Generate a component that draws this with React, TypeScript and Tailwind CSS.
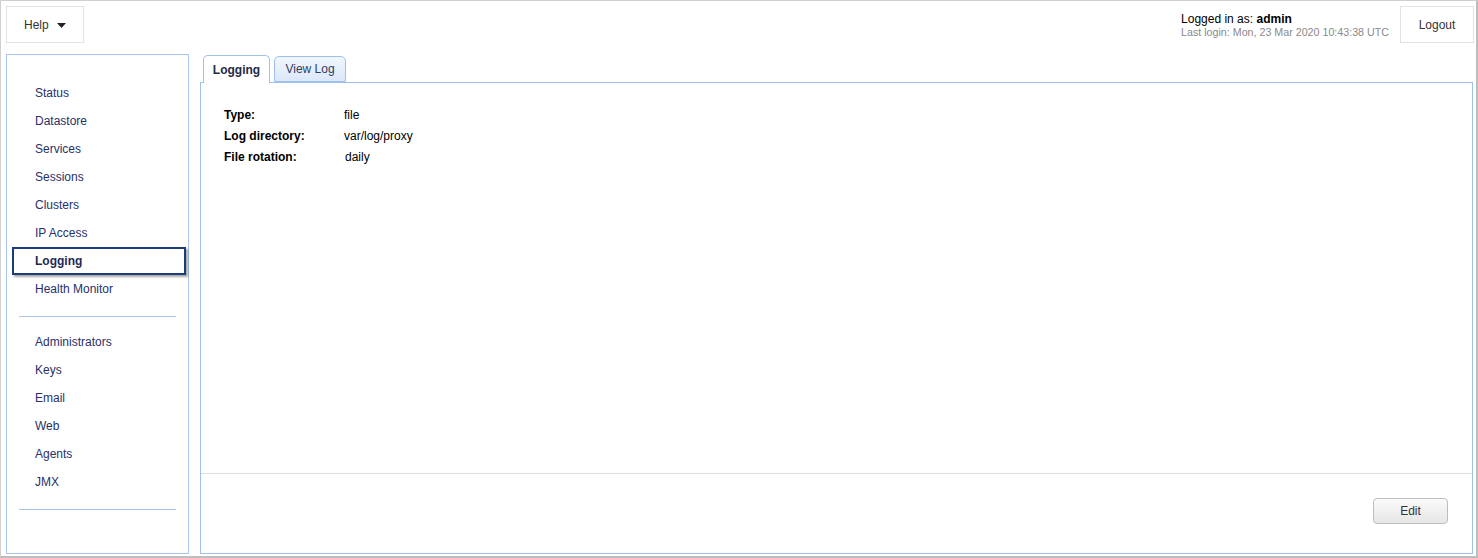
import React from "react";

const navTop = ["Status", "Datastore", "Services", "Sessions", "Clusters", "IP Access", "Logging", "Health Monitor"];
const navBottom = ["Administrators", "Keys", "Email", "Web", "Agents", "JMX"];

function NavItem({ label, active }: { label: string; active?: boolean }) {
  return (
    <div
      className={
        "ml-[5px] mr-[2px] h-[28px] flex items-center pl-[21px] border-2 text-[12px] " +
        (active
          ? "border-[#1b3d7c] font-bold text-[#1f2a55] shadow-[2px_2px_2px_rgba(0,0,0,0.35)]"
          : "border-transparent text-[#28306a]")
      }
    >
      {label}
    </div>
  );
}

export default function App() {
  return (
    <div
      className="w-[1478px] h-[558px] bg-white border-l border-t border-r-2 border-b-2 border-l-[#cfcfcf] border-t-[#cfcfcf] border-r-[#bdbdbd] border-b-[#bdbdbd] box-border pl-[5px] pt-[5px] pr-[1px] flex flex-col"
      style={{ fontFamily: '"Liberation Sans", Arial, sans-serif' }}
    >
      {/* header */}
      <div className="flex items-start h-[37px]">
        <div className="w-[78px] h-[37px] border border-[#e2e2e2] flex items-center pl-[17px] text-[12px] text-[#333]">
          <span>Help</span>
          <svg width="9" height="5" viewBox="0 0 9 5" className="ml-[8px] mt-[1px]">
            <path d="M0 0 L9 0 L4.5 5 Z" fill="#222" />
          </svg>
        </div>
        <div className="flex-1" />
        <div className="flex flex-col pt-[6px] mr-[11px]">
          <div className="text-[12px] text-black leading-[14px]">
            Logged in as: <b>admin</b>
          </div>
          <div className="text-[10.7px] text-[#8a8a8a] leading-[13px]">
            Last login: Mon, 23 Mar 2020 10:43:38 UTC
          </div>
        </div>
        <div className="w-[74px] h-[37px] border border-[#e2e2e2] flex items-center justify-center text-[12px] text-[#333] mr-[1px]">
          Logout
        </div>
      </div>

      {/* body */}
      <div className="flex mt-[11px] h-[500px]">
        {/* sidebar */}
        <div className="w-[183px] h-[500px] border border-[#a9c6ee] pt-[24px] flex flex-col">
          {navTop.map((n) => (
            <NavItem key={n} label={n} active={n === "Logging"} />
          ))}
          <div className="mx-[12px] mt-[13px] h-px bg-[#a9c6ee]" />
          <div className="mt-[11px] flex flex-col">
            {navBottom.map((n) => (
              <NavItem key={n} label={n} />
            ))}
          </div>
          <div className="mx-[12px] mt-[13px] h-px bg-[#a9c6ee]" />
        </div>

        {/* main */}
        <div className="ml-[11px] w-[1273px] flex flex-col">
          <div className="flex items-end h-[28px] pl-[3px] mt-[1px] gap-[4px] relative z-10">
            <div className="w-[67px] h-[28px] border border-b-0 border-[#9fc0ea] rounded-t-[5px] bg-white flex items-center justify-center text-[12px] font-bold text-[#1f2a45]">
              Logging
            </div>
            <div className="w-[72px] h-[26px] border border-[#9fc0ea] rounded-t-[5px] bg-gradient-to-b from-[#f1f6fd] to-[#dbe8fa] flex items-center justify-center text-[12px] text-[#2f3c63] mb-[1px]">
              View Log
            </div>
          </div>
          <div className="-mt-px flex-1 border border-[#9fc0ea] flex flex-col">
            <div className="flex-1 pt-[21px] pl-[23px] text-[12px] text-black">
              {[
                ["Type:", "file"],
                ["Log directory:", "var/log/proxy"],
                ["File rotation:", "daily"],
              ].map(([k, v]) => (
                <div key={k} className="flex h-[21px] items-center">
                  <div className="w-[120px] font-bold">{k}</div>
                  <div className={k === "File rotation:" ? "pl-[1px]" : ""}>{v}</div>
                </div>
              ))}
            </div>
            <div className="h-px bg-[#dedede] mb-[24px]" />
            <div className="flex justify-end pr-[24px] pb-[29px]">
              <div className="w-[75px] h-[26px] rounded-[4px] border border-[#bdbdbd] bg-gradient-to-b from-[#fafafa] to-[#e6e6e6] flex items-center justify-center text-[12px] text-[#333]">
                Edit
              </div>
            </div>
          </div>
        </div>
      </div>
    </div>
  );
}
